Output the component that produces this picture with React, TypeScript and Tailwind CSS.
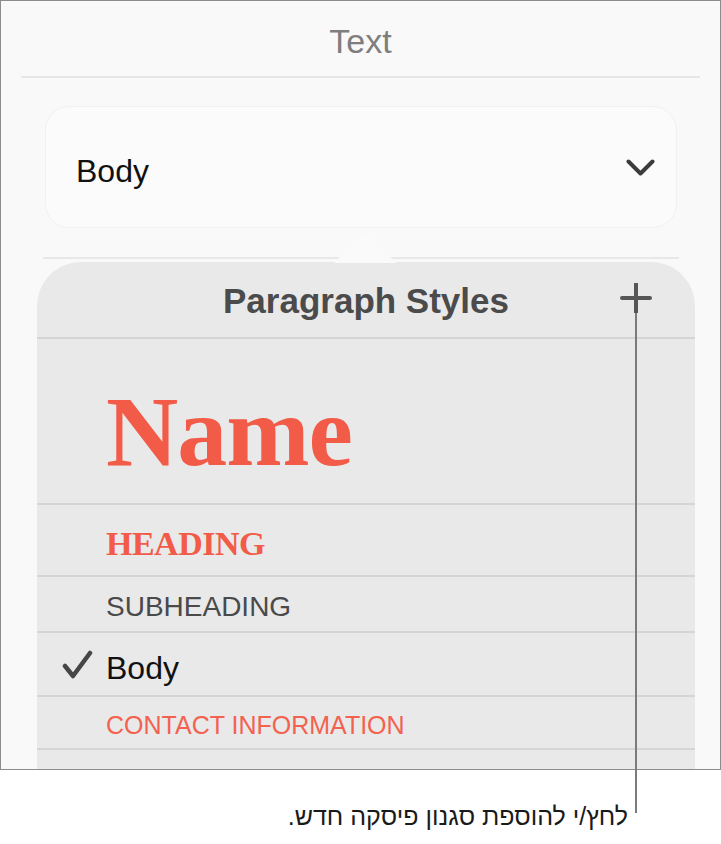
import React from 'react';

const coral = 'text-[#f15b47]';

const Divider = () => <div className="h-[2px] bg-[#d5d5d5]" />;

const App = () => {
  return (
    <div className="relative w-[721px] h-[844px] bg-white font-['Liberation_Sans',Arial,sans-serif]">
      {/* Inspector panel */}
      <div className="flex flex-col w-[721px] h-[770px] border border-[#8c8c8c] bg-[#f9f9f9] overflow-hidden">
        <div className="h-[75px] pt-[23px] text-center text-[34px] leading-none text-[#7e7e7e]">Text</div>
        <div className="mx-[20px] h-[2px] bg-[#e7e7e7]" />

        <div className="mt-[28px] ml-[44px] w-[632px] h-[122px] rounded-[24px] border border-[#f1f1f1] bg-[#fbfbfb] flex items-center justify-between pl-[30px] pr-[21px]">
          <span className="mt-[8px] text-[32px] leading-none text-[#111]">Body</span>
          <svg width="29" height="17" viewBox="0 0 29 17" fill="none">
            <path d="M2.5 2.5 L14.5 14.5 L26.5 2.5" stroke="#3c3c3c" strokeWidth="4" strokeLinecap="round" strokeLinejoin="round" />
          </svg>
        </div>

        <div className="mt-[29px] ml-[42px] w-[636px] h-[2px] bg-[#e8e8e8]" />

        {/* Paragraph styles popover */}
        <div className="mt-[3px] ml-[36px] w-[658px] flex-1 rounded-t-[44px] bg-[#e9e9e9] flex flex-col">
          <div className="relative h-[75px] pt-[21px] text-center text-[35px] leading-none font-bold text-[#4b4b4b]">
            Paragraph Styles
            <svg className="absolute right-[43px] top-[21px]" width="32" height="30" viewBox="0 0 32 30">
              <path d="M2 15 H30 M16 1 V29" stroke="#565656" strokeWidth="4" strokeLinecap="round" />
            </svg>
          </div>
          <Divider />
          <div className="h-[164px] pt-[43px] pl-[69px]">
            <span className={`font-['Liberation_Serif',serif] font-bold text-[100px] leading-none tracking-[-1px] ${coral}`}>Name</span>
          </div>
          <Divider />
          <div className="h-[70px] pt-[22px] pl-[69px]">
            <span className={`font-['Liberation_Serif',serif] font-bold text-[34px] leading-none tracking-[-0.5px] ${coral}`}>HEADING</span>
          </div>
          <Divider />
          <div className="h-[54px] pt-[16px] pl-[69px] text-[28px] leading-none text-[#4a4a4a]">SUBHEADING</div>
          <Divider />
          <div className="h-[62px] pt-[17px] pl-[25px] flex items-start gap-[13px]">
            <svg width="31" height="30" viewBox="0 0 31 30" fill="none">
              <path d="M3 16 L11 26 L28 3" stroke="#464646" strokeWidth="4.5" strokeLinecap="round" strokeLinejoin="round" />
            </svg>
            <span className="mt-[2px] text-[32px] leading-none text-[#111]">Body</span>
          </div>
          <Divider />
          <div className="h-[51px] pt-[16px] pl-[69px] text-[25px] leading-none text-[#f2624f]">CONTACT INFORMATION</div>
          <Divider />
        </div>
      </div>

      {/* popover arrow */}
      <svg className="absolute left-[334px] top-[233px]" width="62" height="30" viewBox="0 0 62 30">
        <path d="M0 30 L25 4 Q31 -1 37 4 L62 30 Z" fill="#fafafa" />
      </svg>

      {/* callout line */}
      <div className="absolute left-[635px] top-[313px] w-[2px] h-[500px] bg-[#7b7b7b]" />

      <div className="mt-[34px] flex justify-end pr-[93px]">
        <p dir="rtl" className="text-[25px] leading-none text-[#1a1a1a]">לחץ/י להוספת סגנון פיסקה חדש.</p>
      </div>
    </div>
  );
};

export default App;
